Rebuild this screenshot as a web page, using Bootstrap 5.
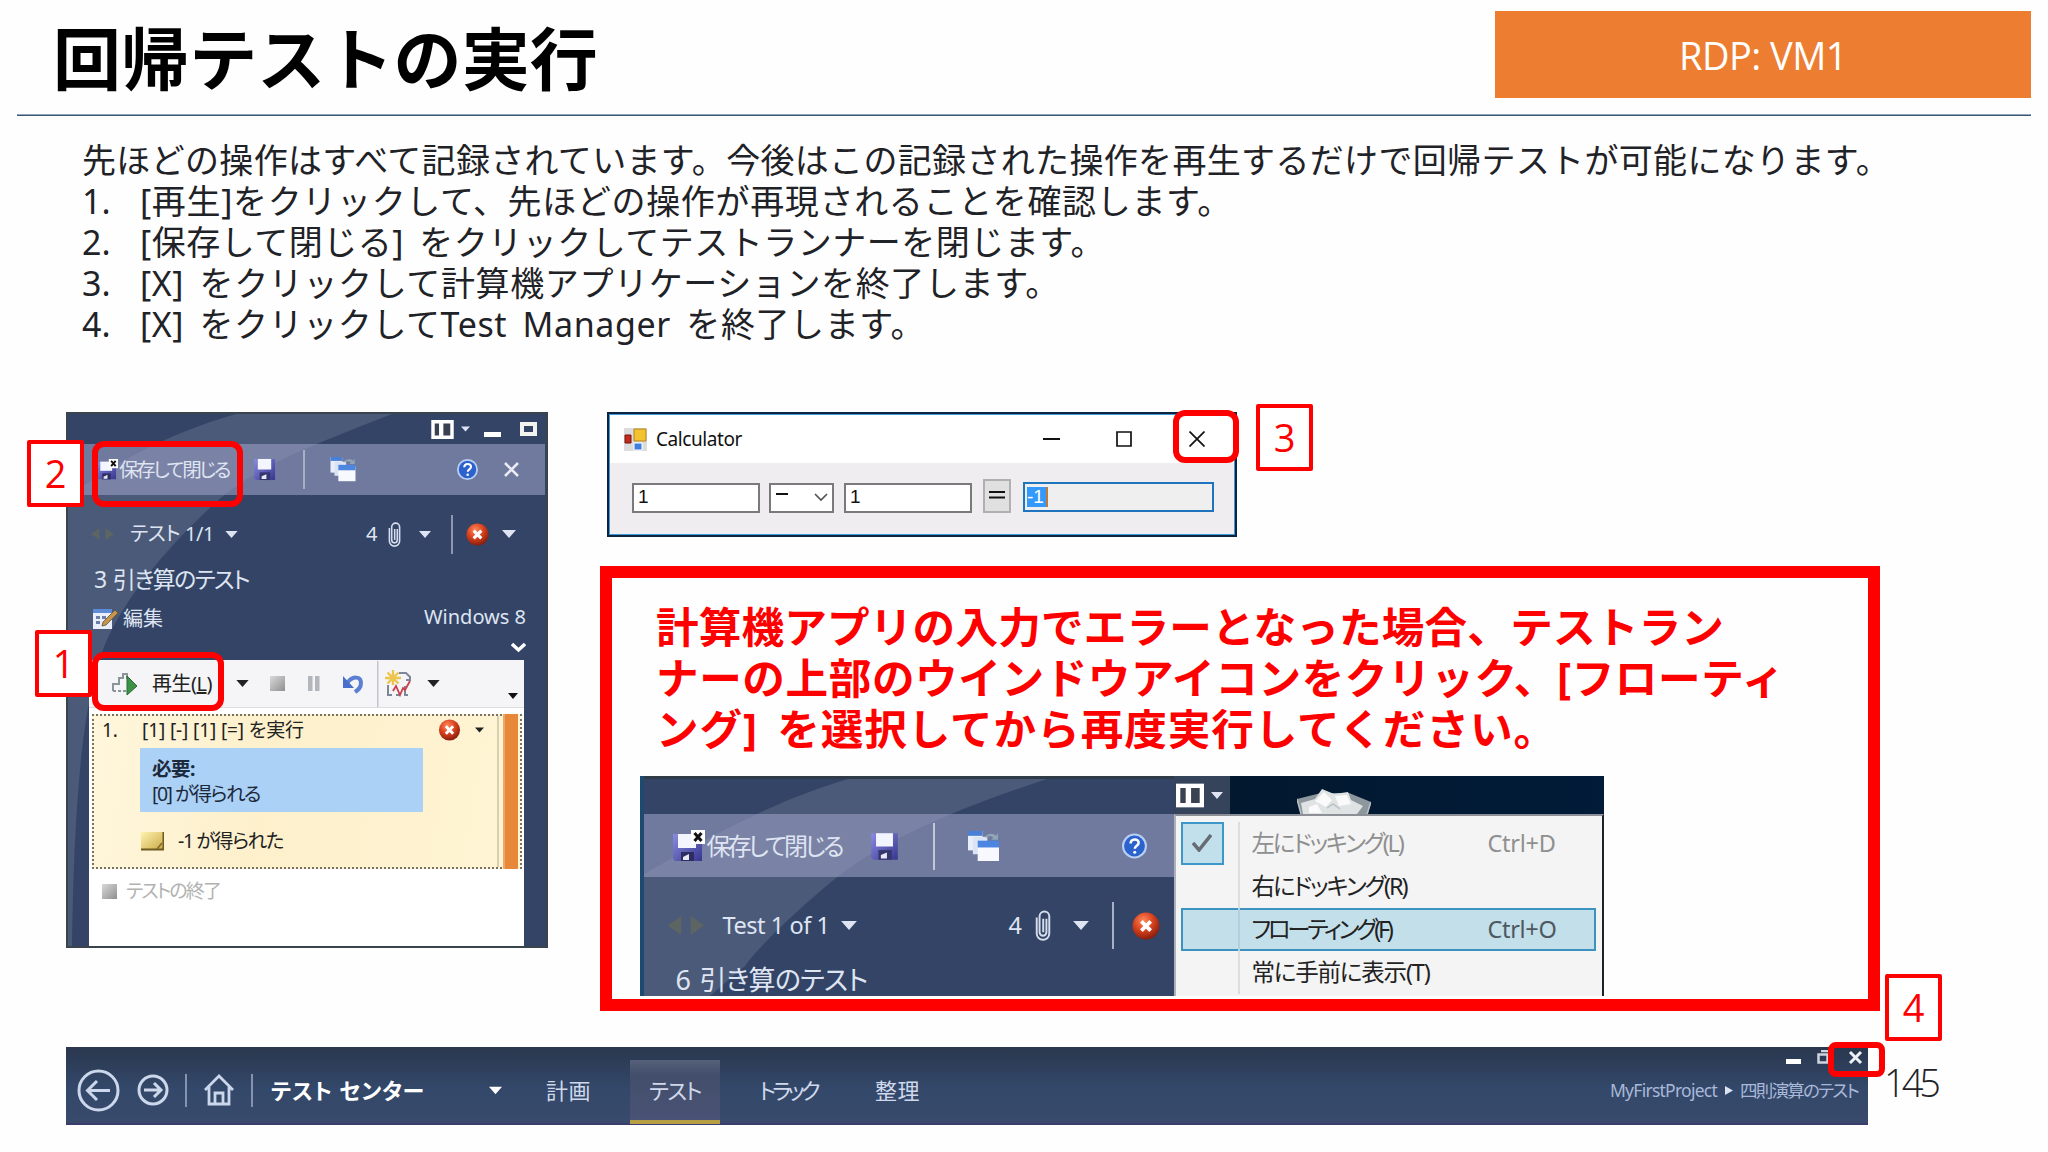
<!DOCTYPE html>
<html lang="ja">
<head>
<meta charset="utf-8">
<title>回帰テストの実行</title>
<link href="https://cdn.jsdelivr.net/npm/bootstrap@5.3.0/dist/css/bootstrap.min.css" rel="stylesheet">
<style>
  body{margin:0;background:#fefefe;font-family:"Noto Sans","Noto Sans CJK JP",sans-serif;color:#1f2226}
  .slide{width:2048px;height:1152px;overflow:hidden;line-height:1}
  .ui{font-feature-settings:"palt"}
  .t{white-space:nowrap;display:block;width:max-content;line-height:1.2}
  svg{display:block}
  .g{display:grid;align-items:center}
  /* heading */
  .topbar{height:114px;margin:0 17px;padding-left:36px;border-bottom:0}
  .rule{height:2px;margin:0 17px;background:#3d5871;border-top:1px solid #8fa3b5}
  .title{font-size:68px;font-weight:700;color:#000;margin:23px 0 0;line-height:72px}
  .tag{width:536px;height:87px;margin-top:11px;padding-top:2px;background:#ed7d31;color:#fff;font:400 38px "Open Sans","Noto Sans",sans-serif}
  .copy{padding:24px 0 0 82px;font-size:34px;height:296px}
  .copy .t{line-height:41px}
  .copy .g{grid-template-columns:58px auto;word-spacing:6px}
  /* runner panel */
  .navy{background:#334466;color:#dfe4f2}
  .runner{width:482px;height:536px;margin-left:66px;box-shadow:inset 0 2px 0 #3a444c,inset 2px 0 0 #3a444c,inset -2px 0 0 #3a444c,inset 0 -2px 0 #3a444c}
  .runner>*{position:relative}
  .runner>.swoosh,.shot .swoosh{position:absolute;left:0;top:0}
  .band{background:rgba(153,157,195,.6)}
  .ra{height:32px;padding:2px 0 0 365px;grid-template-columns:30px 23px 36px auto}
  .rb{height:51px;width:479px;padding-left:31px;grid-template-columns:22px 134px 50px 27px 127px 47px auto;font-size:19.5px}
  .rc{height:42px;margin-top:18px;padding-left:23px;grid-template-columns:41px 95px 141px 22px 31px 32px 15px 36px auto;font-size:20px}
  .rd{height:50px;padding-left:28px;font-size:23px;word-spacing:3px}
  .re{height:28px;padding-left:27px;grid-template-columns:30px 301px auto;font-size:20px}
  .re .t:last-child{margin-top:-5px}
  .rf{height:27px;padding:9px 0 0 445px}
  .sheet{margin-left:23px;width:435px;height:286px;background:#fff;color:#222}
  .tools{height:48px;padding-left:23px;background:#f5f5f7;border-bottom:1px solid #ddd;grid-template-columns:40px 84px 34px 38px 35px 34px 8px 42px 81px auto;font-size:20px}
  .step{margin:6px 0 0 3px;width:430px;height:155px;border:2px dotted #777368;background:linear-gradient(100deg,#fff6dc,#fdf0cb 40%,#fff4d4)}
  .s1{height:28px;padding-left:8px;grid-template-columns:40px 296px 37px auto;font-size:19px}
  .need{margin:4px 0 0 46px;width:283px;height:64px;padding:8px 0 0 12px;background:#abd1f7;color:#1d2a3c;font-size:19.5px}
  .need .t{line-height:25px}
  .s2{height:27px;margin:15px 0 0 46px;grid-template-columns:38px auto;font-size:19.5px}
  .rail{border-left:2px solid #d9cfae;width:23px;padding-left:4px}
  .rail i{display:block;width:15px;height:155px;margin-top:-2px;background:#e6873a;border-left:2px solid #f0a767}
  .fin{height:28px;margin-top:8px;padding-left:13px;grid-template-columns:24px auto;font-size:19px;color:#b2b2b2}
  /* calculator */
  .right{margin-left:52px}
  .calc{margin-left:7px;width:630px;height:125px;border:2px solid #0d2440;background:#efedef;color:#111;box-shadow:inset 0 0 0 1px #3c9bd6}
  .ct{height:48px;margin:1px;background:#fff;padding-left:14px;grid-template-columns:32px 387px 73px 73px auto;font-size:19px}
  .cf{margin:19px 0 0 23px;grid-template-columns:137px 75px 139px 40px 191px;font-family:"Liberation Sans",sans-serif;font-size:19px}
  .box{height:30px;border:2px solid #7a7a7a;background:#fff;padding:2px 4px}
  .w1{width:128px}.w2{width:65px}.w3{width:28px;height:34px;margin-top:-3px;background:#e0e0e1;border:2px solid #b0b0b0;padding:3px 4px}
  .w4{width:191px;margin-top:-2px;background:#efefef;border-color:#1f74bd;padding:3px 0 0 2px}
  .sel{background:#3399fa;color:#fff;height:20px;width:21px;border-right:2px solid #c07a3a}
  /* warning */
  .warn{margin-top:29px;width:1280px;height:445px;border:12.5px solid #f00;background:#fefefe}
  .wtext{padding:23px 0 0 44px;height:197.5px;color:#f00;font-size:42.6px;font-weight:700}
  .wtext .t{line-height:51.2px}
  .wtext .t:last-child{word-spacing:7px}
  .shot{position:relative;margin-left:27.5px;width:964px;height:220px;overflow:hidden}
  .shot>div{position:relative}
  .sl{width:534px;box-shadow:inset 4px 0 0 #1e4a70,inset 0 3px 0 #303b48}
  .sband{margin:38px 0 0 4px;height:63px;padding:2px 0 0 29px;grid-template-columns:34px 163px 63px 34px 155px auto;font-size:24px}
  .sc{height:50px;margin-top:24px;padding-left:27px;grid-template-columns:56px 118px 168px 26px 38px 39px 20px auto;font-size:23.5px}
  .sd{padding:13px 0 0 36px;font-size:27px;word-spacing:3px}
  .desk{height:38px;padding-top:1px;background:linear-gradient(90deg,#35435b 56px,#02182f 56px,#011b38);padding-left:2px;grid-template-columns:35px 86px auto}
  .sr{width:430px}
  .drop{height:182px;background:#f4f4f5;border-top:2px solid #8c8f95;border-left:2px solid #aeb3ba;border-right:2px solid #19232e;color:#222;font-size:23.5px;padding:6px 6px 0 5px}
  .mi{height:43px;grid-template-columns:57px 14px 236px auto}
  .mi .vb{height:43px;width:2px;background:#dedede}
  .off{color:#8f8f8f}
  .tick{width:43px;height:43px;background:#c2e0ec;border:2px solid #3d97c9}
  .hot{background:#c3dfea;box-shadow:inset 0 0 0 2px #3c93bf}
  .hot .vb{background:#b3d0dc}
  .hot .t:last-child{color:#4d5960}
  /* center bar */
  .center{margin:36px 0 0 66px;width:1802px;height:78px;background:linear-gradient(#2a374e,#33486a 55%,#394a6c);border-bottom:2px solid #3b3c6e}
  .cb{height:78px;padding:8px 0 0 11px;grid-template-columns:60px 48px 18px 48px 20px 218px 57px 84px 129px 116px 735px 115px 15px auto;font-size:22px;color:#cfd8ea}
  .tab{height:64px;width:90px;margin-top:4px;background:linear-gradient(#566079,#424e6b 25%,#4a5275);border-bottom:4px solid #b79f45}
  .crumb{font-size:17.5px;color:#a9b8d8}
  .winb{position:absolute;left:1786px;top:1050px}
  /* callouts */
  .num{position:absolute;width:57px;height:67px;border:4.5px solid #f00;background:#fff;color:#f00;font:400 38px/58px "Open Sans","Noto Sans",sans-serif;text-align:center;border-radius:2px}
  .ring{position:absolute;border:6px solid #f00;border-radius:12px}
  .n1{left:35px;top:630px}.n2{left:27px;top:440px}.n3{left:1256px;top:404px}.n4{left:1885px;top:974px}
  .r1{left:92px;top:652px;width:132px;height:59px}
  .r2{left:92px;top:441px;width:151px;height:66px}
  .r3{left:1173px;top:410px;width:66px;height:53px}
  .r4{left:1828px;top:1042px;width:57px;height:35px;border-radius:8px}
  .pg{position:absolute;left:1884px;top:1055px;font:300 38px/54px "Open Sans","Noto Sans",sans-serif}
</style>
</head>
<body>
<svg width="0" height="0" class="position-absolute">
  <defs>
    <linearGradient id="gf" x1="0" y1="0" x2="1" y2="1"><stop offset="0" stop-color="#8b8be0"/><stop offset="1" stop-color="#36368f"/></linearGradient>
    <radialGradient id="gb" cx=".4" cy=".3" r=".7"><stop offset="0" stop-color="#ff8a5c"/><stop offset=".5" stop-color="#dc4520"/><stop offset="1" stop-color="#8c1d0c"/></radialGradient>
    <linearGradient id="gs" x1="0" y1="0" x2="1" y2="1"><stop offset="0" stop-color="#d9d9d9"/><stop offset="1" stop-color="#8f8f8f"/></linearGradient>
    <linearGradient id="gn" x1="0" y1="0" x2="1" y2="1"><stop offset="0" stop-color="#fff3b0"/><stop offset="1" stop-color="#c9a945"/></linearGradient>
  </defs>
  <symbol id="floppy" viewBox="0 0 24 24"><path d="M1 1h22v22H3l-2-2z" fill="url(#gf)"/><path d="M5 1h14v11H5z" fill="#f4f6ff"/><path d="M7 15h11v8H7z" fill="#35356f"/><path d="M9 19l5-2v5H9z" fill="#e8e8f4"/></symbol>
  <symbol id="floppyx" viewBox="0 0 32 32"><path d="M0 4h29v27H2l-2-2z" fill="url(#gf)"/><path d="M5 4h18v14H5z" fill="#f4f6ff"/><path d="M8 22h13v9H8z" fill="#2c2c60"/><path d="M10 27l6-3v6h-6z" fill="#e8e8f4"/><path d="M18 0h14v14H18z" fill="#fff"/><path d="M21.500 3l7 8m0-8l-7 8" stroke="#111" stroke-width="3"/></symbol>
  <symbol id="wins" viewBox="0 0 32 32"><path d="M0 0h15v20H0z" fill="#e8eefa"/><path d="M0 0h15v5H0z" fill="#4a7fd6"/><path d="M5 6h15v18H5z" fill="#dbe4f5"/><path d="M10 12h22v19H10z" fill="#f7f9ff"/><path d="M10 10h22v7H10z" fill="#4c86e0"/><path d="M17 6c4-4 9-4 12-1l2-3v7h-7l2-2c-2-2-5-2-7 0z" fill="#8fa6b6"/></symbol>
  <symbol id="help" viewBox="0 0 24 24"><circle cx="12" cy="12" r="11" fill="#2c62cc" stroke="#b8d0f6" stroke-width="2"/><path d="M8.300 9.500c0-5 7.700-5 7.700-.6 0 3-3.700 2.900-3.700 5.800" fill="none" stroke="#fff" stroke-width="2.400"/><circle cx="12.200" cy="18" r="1.500" fill="#fff"/></symbol>
  <symbol id="ball" viewBox="0 0 24 24"><circle cx="12" cy="12" r="11.500" fill="url(#gb)"/><path d="M8 8l8 8m0-8l-8 8" stroke="#fff" stroke-width="3.200"/></symbol>
  <symbol id="clip" viewBox="0 0 14 28"><path d="M10 8v12a3 3 0 0 1-6 0V6a4 4 0 0 1 8.500 0v15a5.500 5.500 0 0 1-11 0V7M7.200 8v12" fill="none" stroke="#d5dced" stroke-width="1.700"/></symbol>
  <symbol id="dock" viewBox="0 0 26 22"><path d="M0 0h26v22H0z" fill="#fff"/><path d="M4 4h5v14H4zM14 4h8v14h-8z" fill="#3a4150"/></symbol>
  <symbol id="dn" viewBox="0 0 14 8"><path d="M0 0h14L7 8z" fill="currentColor"/></symbol>
  <symbol id="lr" viewBox="0 0 38 20"><path d="M14 0v20L0 10zM24 0v20l14-10z" fill="#5d6563"/></symbol>
</svg>
<main class="slide position-relative">
  <header>
    <div class="topbar d-flex justify-content-between align-items-start">
      <h1 class="title t" data-w="545">回帰テストの実行</h1>
      <div class="tag d-flex align-items-center justify-content-center"><span class="t" data-w="168">RDP: VM1</span></div>
    </div>
    <div class="rule"></div>
  </header>

  <section class="copy">
    <span class="t" data-w="1808">先ほどの操作はすべて記録されています。今後はこの記録された操作を再生するだけで回帰テストが可能になります。</span>
    <div class="g"><span class="t">1.</span><span class="t" data-w="1092">[再生]をクリックして、先ほどの操作が再現されることを確認します。</span></div>
    <div class="g"><span class="t">2.</span><span class="t" data-w="965">[保存して閉じる] をクリックしてテストランナーを閉じます。</span></div>
    <div class="g"><span class="t">3.</span><span class="t" data-w="920">[X] をクリックして計算機アプリケーションを終了します。</span></div>
    <div class="g"><span class="t">4.</span><span class="t" data-w="785">[X] をクリックしてTest Manager を終了します。</span></div>
  </section>

  <section class="d-flex align-items-start">
    <div class="runner navy ui position-relative">
      <svg class="swoosh" width="482" height="536"><path d="M170 2H326C250 32 200 50 157 84 100 135 60 185 40 230 15 290 8 400 6 534H2V86C40 55 100 22 170 2z" fill="#4b5a78"/></svg>
      <div class="g ra"><svg width="23" height="19"><use href="#dock"/></svg><svg width="9" height="6"><use href="#dn"/></svg><svg width="17" height="16"><path d="M0 11h17v5H0z" fill="#fff"/></svg><svg width="17" height="14"><path d="M2 2h13v10H2z" fill="none" stroke="#f2f2ee" stroke-width="4"/></svg></div>
      <div class="g rb band"><svg width="21" height="25"><use href="#floppyx"/></svg><span class="t" data-w="110">保存して閉じる</span><svg width="23" height="23"><use href="#floppy"/></svg><svg width="2" height="39"><path d="M0 0h2v39H0z" fill="#a9b0c4"/></svg><svg width="26" height="25"><use href="#wins"/></svg><svg width="21" height="21"><use href="#help"/></svg><svg width="15" height="15"><path d="M1 1l13 13m0-13L1 14" stroke="#e9ecf4" stroke-width="2.600"/></svg></div>
      <div class="g rc"><svg width="27" height="12"><use href="#lr"/></svg><span class="t" data-w="84">テスト 1/1</span><svg width="13" height="7"><use href="#dn"/></svg><span class="t">4</span><svg width="13" height="27"><use href="#clip"/></svg><svg width="12" height="7"><use href="#dn"/></svg><svg width="2" height="39"><path d="M0 0h2v39H0z" fill="#8d97ae"/></svg><svg width="23" height="23"><use href="#ball"/></svg><svg width="14" height="8"><use href="#dn"/></svg></div>
      <div class="rd d-flex align-items-center"><span class="t" data-w="155">3 引き算のテスト</span></div>
      <div class="g re"><svg width="25" height="20" viewBox="0 0 25 20"><path d="M0 0h19v20H0z" fill="#e9eef8"/><path d="M0 0h19v4H0z" fill="#5d8bd6"/><path d="M3 7h4v3H3zM9 7h4v3H9zM3 12h4v3H3z" fill="#6a7ea8"/><path d="M22 1l3 3-12 12-4 1 1-4z" fill="#c9934b" stroke="#553" stroke-width=".8"/></svg><span class="t" data-w="40">編集</span><span class="t" data-w="102">Windows 8</span></div>
      <div class="rf"><svg width="15" height="11"><path d="M1 2l6.500 6L14 2" fill="none" stroke="#fff" stroke-width="3.400"/></svg></div>
      <div class="sheet">
        <div class="g tools">
          <svg width="26" height="24" viewBox="0 0 26 24"><path d="M1 19v-7h6V6h4V2h4v5" fill="none" stroke="#8b9499" stroke-width="2"/><path d="M1 19h13" stroke="#8b9499" stroke-width="2" stroke-dasharray="3 2"/><path d="M15 4v19l10-9z" fill="#3d9146" stroke="#2a6b34"/></svg>
          <span class="t" data-w="60">再生(<u>L</u>)</span>
          <svg width="13" height="7"><use href="#dn"/></svg>
          <svg width="15" height="15"><path d="M0 0h15v15H0z" fill="url(#gs)"/></svg>
          <svg width="12" height="15"><path d="M0 0h4.500v15H0zM7 0h4.500v15H7z" fill="#b3b6bb"/></svg>
          <svg width="21" height="20" viewBox="0 0 21 20"><path d="M5 8c5-6 13-6 13 1 0 5-3 7-6 9" fill="none" stroke="#5b7fd2" stroke-width="4"/><path d="M0 2v12h11z" fill="#4a6fca"/></svg>
          <svg width="2" height="46"><path d="M0 0h1.500v46H0z" fill="#c3c5ca"/></svg>
          <svg width="26" height="27" viewBox="0 0 26 27"><path d="M8 0v15M0 8h16M2.500 2.500l11 11m0-11l-11 11" stroke="#ecc54c" stroke-width="2.400"/><path d="M14 3h7l4 4v3h-4M3 15v10h4m4 0h4m5-9v9h3" fill="none" stroke="#7d8798" stroke-width="2"/><path d="M8 21l3-5 4 9 3-7 2 2 5-9" fill="none" stroke="#c9404a" stroke-width="1.800"/></svg>
          <svg width="13" height="7"><use href="#dn"/></svg>
          <svg width="10" height="32"><path d="M0 25h10l-5 6z" fill="#111"/></svg>
        </div>
        <div class="step d-flex">
          <div class="flex-grow-1">
            <div class="g s1"><span class="t">1.</span><span class="t" data-w="162">[1] [-] [1] [=] を実行</span><svg width="23" height="22"><use href="#ball"/></svg><svg width="9" height="6"><use href="#dn"/></svg></div>
            <div class="need"><span class="t fw-bold" data-w="43">必要:</span><span class="t" data-w="108">[0] が得られる</span></div>
            <div class="g s2"><svg width="24" height="20"><path d="M1 1h22v18H1z" fill="url(#gn)"/><path d="M1 18.500h22.500V1" fill="none" stroke="#6f5a20" stroke-width="2"/><path d="M17 18l5-6" stroke="#806a2c" stroke-width="1.500"/></svg><span class="t" data-w="105">-1 が得られた</span></div>
          </div>
          <div class="rail"><i></i></div>
        </div>
        <div class="g fin"><svg width="15" height="15"><path d="M0 0h15v15H0z" fill="url(#gs)"/></svg><span class="t" data-w="94">テストの終了</span></div>
      </div>
    </div>

    <div class="right">
      <div class="calc ui">
        <div class="g ct">
          <svg width="23" height="23" viewBox="0 0 23 23"><path d="M0 0h23v23H0z" fill="#dcdcdc"/><path d="M10 1h12v12H10z" fill="#f2c230" stroke="#b5861a"/><path d="M1 7h6v8H1z" fill="#c22b20" stroke="#7d140d"/><path d="M10 15h8v7h-8z" fill="#3e7fe0" stroke="#fff"/></svg>
          <span class="t" data-w="86">Calculator</span>
          <svg width="17" height="3"><path d="M0 0h17v2H0z" fill="#111"/></svg>
          <svg width="16" height="16"><path d="M1 1h14v14H1z" fill="none" stroke="#111" stroke-width="1.700"/></svg>
          <svg width="16" height="16"><path d="M.5.5l15 15m0-15l-15 15" stroke="#111" stroke-width="1.700"/></svg>
        </div>
        <div class="g cf">
          <div class="box w1">1</div>
          <div class="box w2 d-flex align-items-center justify-content-between"><svg width="13" height="12"><path d="M1 1h12v2H1z" fill="#111"/></svg><svg width="14" height="9"><path d="M1 1l6 6 6-6" fill="none" stroke="#555" stroke-width="1.700"/></svg></div>
          <div class="box w1">1</div>
          <div class="box w3"><svg width="16" height="20"><path d="M0 8h16M0 13.500h16" stroke="#111" stroke-width="2"/></svg></div>
          <div class="box w4"><div class="sel">-1</div></div>
        </div>
      </div>

      <div class="warn">
        <div class="wtext">
          <span class="t" data-w="1068">計算機アプリの入力でエラーとなった場合、テストラン</span>
          <span class="t" data-w="1129">ナーの上部のウインドウアイコンをクリック、[フローティ</span>
          <span class="t" data-w="901">ング] を選択してから再度実行してください。</span>
        </div>
        <div class="shot navy ui d-flex">
          <svg class="swoosh" width="534" height="220"><path d="M212 2H410C300 38 240 68 196 102 150 140 115 175 105 190L70 220H4V98C70 60 140 22 212 2z" fill="#4b5a78"/></svg>
          <div class="sl">
            <div class="g sband band"><svg width="32" height="32"><use href="#floppyx"/></svg><span class="t" data-w="135">保存して閉じる</span><svg width="29" height="29"><use href="#floppy"/></svg><svg width="2" height="47"><path d="M0 0h2v47H0z" fill="#c2c8da"/></svg><svg width="33" height="31"><use href="#wins"/></svg><svg width="25" height="26"><use href="#help"/></svg></div>
            <div class="g sc"><svg width="38" height="19"><use href="#lr"/></svg><span class="t" data-w="107">Test 1 of 1</span><svg width="16" height="9"><use href="#dn"/></svg><span class="t">4</span><svg width="16" height="33"><use href="#clip"/></svg><svg width="16" height="9"><use href="#dn"/></svg><svg width="2" height="47"><path d="M0 0h2v47H0z" fill="#a9b0c4"/></svg><svg width="28" height="28"><use href="#ball"/></svg></div>
            <div class="sd"><span class="t" data-w="192">6 引き算のテスト</span></div>
          </div>
          <div class="sr">
            <div class="g desk"><svg width="28" height="25"><use href="#dock"/></svg><svg width="12" height="7"><use href="#dn"/></svg><svg class="align-self-end" width="74" height="25" viewBox="0 0 74 25"><path d="M0 10l4 15h67l3-12-22-9H24z" fill="#8e979e"/><path d="M4 14l14-4 7-10 12 5 14-2 3 8 12 6-6 8H6z" fill="#dfe3e4"/><path d="M18 12l9-9 8 8-6 7zM38 7l12-1 4 9-12 2zM12 18l8-3 5 9H12z" fill="#fafafa"/><path d="M0 10l4 15m66 0l4-12M30 19l6-4 7 5" stroke="#b9c0c4" fill="none" stroke-width="1.500"/></svg></div>
            <div class="drop">
              <div class="g mi off"><div class="tick d-flex align-items-center justify-content-center"><svg width="20" height="18"><path d="M1 9l6 7L19 1" fill="none" stroke="#666d72" stroke-width="3.500"/></svg></div><div class="vb"></div><span class="t" data-w="151">左にドッキング(L)</span><span class="t" data-w="68">Ctrl+D</span></div>
              <div class="g mi"><div></div><div class="vb"></div><span class="t" data-w="155">右にドッキング(R)</span></div>
              <div class="g mi hot"><div></div><div class="vb"></div><span class="t" data-w="139">フローティング(F)</span><span class="t" data-w="69">Ctrl+O</span></div>
              <div class="g mi"><div></div><div class="vb"></div><span class="t" data-w="178">常に手前に表示(T)</span></div>
            </div>
          </div>
        </div>
      </div>
    </div>
  </section>

  <nav class="center ui">
    <div class="g cb">
      <svg width="43" height="43" viewBox="0 0 43 43"><g fill="none" stroke="#ccd7ec" stroke-width="3"><circle cx="21.500" cy="21.500" r="19.500"/><path d="M33 21.500H11M20 12l-9.500 9.500L20 31"/></g></svg>
      <svg width="32" height="32" viewBox="0 0 32 32"><g fill="none" stroke="#ccd7ec" stroke-width="3"><circle cx="16" cy="16" r="14"/><path d="M7 16h17M17 9l7 7-7 7"/></g></svg>
      <svg width="2" height="33"><path d="M0 0h2v33H0z" fill="#8593b0"/></svg>
      <svg width="32" height="32" viewBox="0 0 32 32"><path d="M2 16L16 2l14 14M6 13v17h20V13M12 30V19h8v11" fill="none" stroke="#ccd7ec" stroke-width="2.800"/></svg>
      <svg width="2" height="33"><path d="M0 0h2v33H0z" fill="#8593b0"/></svg>
      <span class="t fw-bold text-white" data-w="154">テスト センター</span>
      <svg width="13" height="9" class="text-white"><use href="#dn"/></svg>
      <span class="t" data-w="45">計画</span>
      <div class="tab d-flex align-items-center justify-content-center"><span class="t" data-w="52">テスト</span></div>
      <span class="t" data-w="58">トラック</span>
      <span class="t" data-w="45">整理</span>
      <span class="t crumb" data-w="107">MyFirstProject</span>
      <svg width="8" height="9"><path d="M0 0l8 4.500L0 9z" fill="#dce3f2"/></svg>
      <span class="t crumb" data-w="118">四則演算のテスト</span>
    </div>
  </nav>

  <svg class="winb" width="80" height="15"><path d="M0 9h15v5H0z" fill="#fff"/><path d="M35 1h10v9M32.500 4.500h9v8h-9z" fill="none" stroke="#cfd4de" stroke-width="2.500"/><path d="M64 2l11 11m0-11L64 13" stroke="#eef0f5" stroke-width="3"/></svg>
  <div class="ring r1"></div><div class="ring r2"></div><div class="ring r3"></div><div class="ring r4"></div>
  <div class="num n1">1</div><div class="num n2">2</div><div class="num n3">3</div><div class="num n4">4</div>
  <span class="pg t" data-w="53">145</span>
</main>
<script src="https://cdn.jsdelivr.net/npm/bootstrap@5.3.0/dist/js/bootstrap.bundle.min.js"></script>
<script>
  // Track each label so that it fills the width given in data-w.
  document.querySelectorAll('[data-w]').forEach(function (el) {
    var w = parseFloat(el.dataset.w), n = el.textContent.length;
    el.style.letterSpacing = ((w - el.getBoundingClientRect().width) / n).toFixed(3) + 'px';
  });
</script>
</body>
</html>
